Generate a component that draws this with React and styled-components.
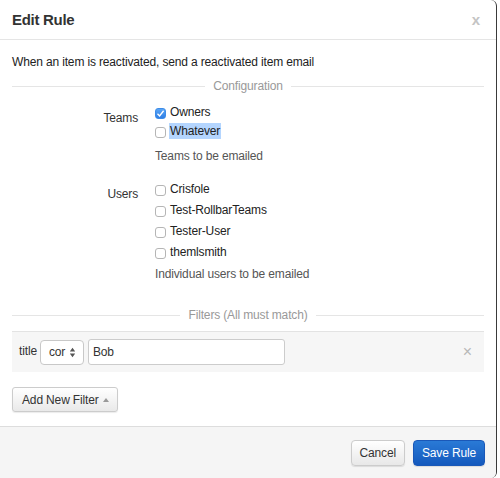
import { createGlobalStyle } from "styled-components";
import styled from "styled-components";

const GlobalStyle = createGlobalStyle`
  body {
    margin: 0;
    background: #fff;
    font-family: "Liberation Sans", Arial, sans-serif;
    letter-spacing: -0.15px;
    color: #333;
  }
  button, input {
    letter-spacing: -0.15px;
  }
`;

const teams = [
  { name: "Owners", checked: true },
  { name: "Whatever", selected: true },
];
const users = ["Crisfole", "Test-RollbarTeams", "Tester-User", "themlsmith"];

function Check({ checked }) {
  return (
    <Box checked={checked}>
      {checked && (
        <svg width="9" height="9" viewBox="0 0 9 9">
          <path d="M1.5 4.8 L3.6 6.9 L7.6 1.8" fill="none" stroke="#fff" strokeWidth="1.4" />
        </svg>
      )}
    </Box>
  );
}

function App() {
  return (
    <>
      <GlobalStyle />
      <Modal>
        <Header>
          <Title>Edit Rule</Title>
          <Close>x</Close>
        </Header>
        <Body>
          <Intro>When an item is reactivated, send a reactivated item email</Intro>
          <Legend>
            <span>Configuration</span>
          </Legend>
          <Group>
            <Label>Teams</Label>
            <Controls>
              {teams.map((t) => (
                <Option key={t.name} rowHeight={19}>
                  <Check checked={t.checked} />
                  <OptText selected={t.selected}>{t.name}</OptText>
                </Option>
              ))}
              <Help gap={9}>Teams to be emailed</Help>
            </Controls>
          </Group>
          <Group>
            <Label>Users</Label>
            <Controls>
              {users.map((u) => (
                <Option key={u} rowHeight={21}>
                  <Check />
                  <OptText>{u}</OptText>
                </Option>
              ))}
              <Help gap={5}>Individual users to be emailed</Help>
            </Controls>
          </Group>
          <Legend filters>
            <span>Filters (All must match)</span>
          </Legend>
          <FilterRow>
            <FilterLabel>title</FilterLabel>
            <Select>
              cor
              <svg width="7" height="11" viewBox="0 0 7 11">
                <path d="M3.5 0.8 L6.2 4.5 L0.8 4.5 Z M3.5 10.2 L6.2 6.5 L0.8 6.5 Z" fill="#555" />
              </svg>
            </Select>
            <TextInput defaultValue="Bob" />
            <Remove>×</Remove>
          </FilterRow>
          <AddButton>
            Add New Filter
            <Caret />
          </AddButton>
        </Body>
        <Footer>
          <Button>Cancel</Button>
          <Button primary>Save Rule</Button>
        </Footer>
      </Modal>
    </>
  );
}

const Modal = styled.div`
  width: 497px;
  height: 478px;
  border-right: 1px solid #3a3a3a;
  border-radius: 0 6px 6px 0;
  background: #fff;
  display: flex;
  flex-direction: column;
  box-sizing: border-box;
  overflow: hidden;
`;

const Header = styled.div`
  height: 40px;
  padding: 0 14px 0 12px;
  display: flex;
  align-items: center;
  justify-content: space-between;
  border-bottom: 1px solid #e5e5e5;
  box-sizing: border-box;
`;

const Title = styled.h3`
  margin: 0;
  font-size: 15px;
  font-weight: bold;
  letter-spacing: -0.3px;
  color: #333;
`;

const Close = styled.span`
  font-size: 15px;
  font-weight: bold;
  color: #c4c4c4;
  margin-right: 2px;
`;

const Body = styled.div`
  flex: 1;
  padding: 14px 12px 0 12px;
`;

const Intro = styled.p`
  margin: 0;
  font-size: 12px;
  line-height: 16px;
  color: #222;
`;

const Legend = styled.div`
  display: flex;
  align-items: center;
  gap: 8px;
  margin: ${(p) => (p.filters ? "27px 0 9px" : "9px 0 9px")};
  font-size: 12px;
  color: #999;
  &::before,
  &::after {
    content: "";
    flex: 1;
    border-top: 1px solid #e5e5e5;
  }
`;

const Group = styled.div`
  display: flex;
  margin-bottom: 15px;
`;

const Label = styled.div`
  width: 126px;
  text-align: right;
  font-size: 12px;
  padding-top: 9px;
  color: #333;
`;

const Controls = styled.div`
  margin-left: 17px;
  display: flex;
  flex-direction: column;
`;

const Option = styled.label`
  display: flex;
  align-items: center;
  height: ${(p) => p.rowHeight}px;
  font-size: 12px;
  color: #222;
`;

const Box = styled.span`
  width: 11px;
  height: 11px;
  border-radius: 3px;
  margin-right: 3px;
  margin-top: 3px;
  box-sizing: border-box;
  display: flex;
  align-items: center;
  justify-content: center;
  border: 1px solid ${(p) => (p.checked ? "#3d8ce8" : "#b5b5b5")};
  background: ${(p) => (p.checked ? "linear-gradient(#5aa5f5, #2f7fe6)" : "#fff")};
`;

const OptText = styled.span`
  background: ${(p) => (p.selected ? "#b4d5fe" : "transparent")};
  padding: 0 1px;
  line-height: 16px;
`;

const Help = styled.div`
  margin-top: ${(p) => p.gap}px;
  font-size: 12px;
  color: #555;
`;

const FilterRow = styled.div`
  display: flex;
  align-items: center;
  height: 41px;
  padding: 0 12px 0 7px;
  background: #f6f6f6;
  border-top: 1px solid #e3e3e3;
  box-sizing: border-box;
`;

const FilterLabel = styled.span`
  font-size: 12px;
  color: #333;
  margin-right: 3px;
  margin-top: -2px;
`;

const Select = styled.div`
  width: 44px;
  height: 25px;
  box-sizing: border-box;
  border: 1px solid #c8c8c8;
  border-radius: 4px;
  background: #fff;
  display: flex;
  align-items: center;
  justify-content: space-between;
  padding: 0 7px 0 8px;
  font-size: 12px;
  color: #333;
  margin-right: 4px;
`;

const TextInput = styled.input`
  width: 197px;
  height: 26px;
  box-sizing: border-box;
  border: 1px solid #ccc;
  border-radius: 3px;
  padding: 0 4px;
  font-family: "Liberation Sans", Arial, sans-serif;
  font-size: 12px;
  color: #333;
  outline: none;
`;

const Remove = styled.span`
  margin-left: auto;
  font-size: 16px;
  color: #b8b8b8;
`;

const AddButton = styled.button`
  margin-top: 15px;
  height: 25px;
  padding: 0 8px 0 9px;
  display: flex;
  align-items: center;
  gap: 4px;
  font-family: "Liberation Sans", Arial, sans-serif;
  font-size: 12px;
  color: #333;
  background: linear-gradient(#fff, #e9e9e9);
  border: 1px solid #ccc;
  border-radius: 3px;
  box-shadow: 0 1px 1px rgba(0, 0, 0, 0.08);
`;

const Caret = styled.span`
  width: 0;
  height: 0;
  border-left: 3px solid transparent;
  border-right: 3px solid transparent;
  border-bottom: 4px solid #999;
`;

const Footer = styled.div`
  height: 52px;
  display: flex;
  align-items: center;
  justify-content: flex-end;
  gap: 8px;
  padding: 0 11px 0 0;
  background: #f5f5f5;
  border-top: 1px solid #ddd;
  box-sizing: border-box;
`;

const Button = styled.button`
  height: 26px;
  padding: 0 8px;
  font-family: "Liberation Sans", Arial, sans-serif;
  font-size: 12px;
  border-radius: 4px;
  color: ${(p) => (p.primary ? "#fff" : "#333")};
  border: 1px solid ${(p) => (p.primary ? "#1a58b8" : "#ccc")};
  background: ${(p) =>
    p.primary ? "linear-gradient(#2a7ad6, #1459bd)" : "linear-gradient(#fff, #e8e8e8)"};
  box-shadow: 0 1px 1px rgba(0, 0, 0, 0.1);
`;

export default App;
